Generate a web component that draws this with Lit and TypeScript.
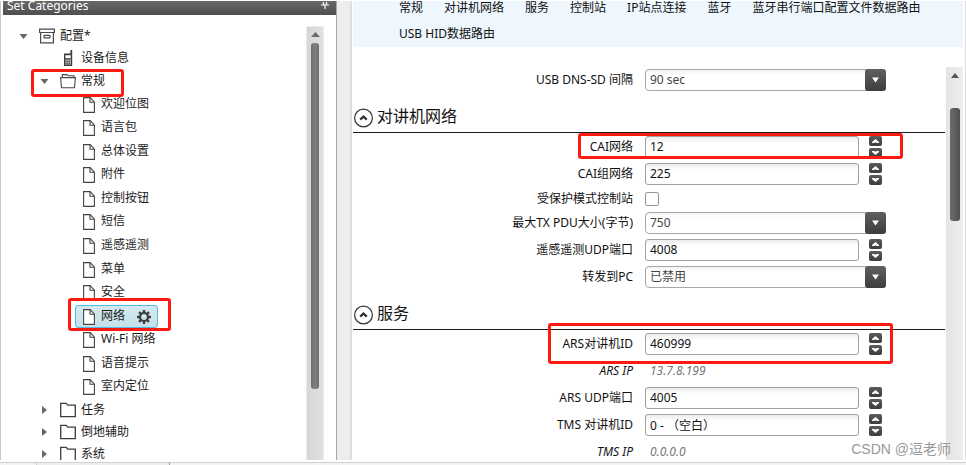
import { LitElement, html, css, svg, nothing } from "lit";
import { customElement, property, state } from "lit/decorators.js";
import { classMap } from "lit/directives/class-map.js";

const icons: Record<string, unknown> = {
  archive: svg`<svg width="16" height="16" viewBox="0 0 16 16" fill="none" stroke="#4a4a4a" stroke-width="1.2"><path d="M.6 1.1h14.8v3.4H.6zM1.6 4.500v10.400h12.800V4.500"/><rect x="5" y="7.4" width="6" height="2.4" rx=".6"/></svg>`,
  phone: svg`<svg width="16" height="16" viewBox="0 0 16 16"><path d="M10.4 0h1.8v16H4V3.6h6.4z" fill="#3c3c3c"/><path d="M5.4 5.2h5.4v3H5.4zM5.4 9.6h1.3v1.2H5.4zm2.1 0h1.3v1.2H7.5zm2.1 0h1.3v1.2H9.6zM5.4 11.6h1.3v1.2H5.4zm2.1 0h1.3v1.2H7.5zm2.1 0h1.3v1.2H9.6zM5.4 13.6h1.3v1H5.4zm2.1 0h1.3v1H7.5zm2.1 0h1.3v1H9.6z" fill="#fff"/></svg>`,
  open: svg`<svg width="16" height="16" viewBox="0 0 16 16" fill="none" stroke="#4a4a4a" stroke-width="1.1"><path d="M2.4 4.4V1.6H7l1 1.2h6v1.6M.6 4.6h14.8l-.9 10.2H1.5z"/></svg>`,
  folder: svg`<svg width="16" height="16" viewBox="0 0 16 16" fill="none" stroke="#3c3c3c" stroke-width="1.3"><path d="M.7 14.6V1.4h5.6l1.4 1.7h7.6v11.5z"/></svg>`,
  file: svg`<svg width="12" height="16" viewBox="0 0 12 16" fill="none" stroke="#444" stroke-width="1.1"><path d="M.6.6h6.6l4.2 4.6v10.2H.6z" fill="#fff"/><path d="M7 .8v4.4h4.2"/></svg>`,
};

const gear = svg`<svg width="14" height="14" viewBox="0 0 14 14" fill="none" stroke="#3a3a3a"><circle cx="7" cy="7" r="4" stroke-width="2.2"/><path d="M7 0v2.4M7 11.6V14M0 7h2.4M11.6 7H14M2.1 2.1l1.6 1.6M10.3 10.3l1.6 1.6M2.1 11.9l1.6-1.6M10.3 3.7l1.6-1.6" stroke-width="2.4"/></svg>`;

const pages = ["欢迎位图", "语言包", "总体设置", "附件", "控制按钮", "短信", "遥感遥测", "菜单", "安全", "网络", "Wi-Fi 网络", "语音提示", "室内定位"];
const folders = ["任务", "倒地辅助", "系统"];
const tabs = ["常规", "对讲机网络", "服务", "控制站", "IP站点连接", "蓝牙", "蓝牙串行端口配置文件数据路由", "USB HID数据路由"];

@customElement("category-tree")
class CategoryTree extends LitElement {
  @state() private selected = "网络";

  static styles = css`
    :host { display: flex; min-width: 0; min-height: 0; overflow: hidden; }
    ul { list-style: none; margin: 0; padding: 0; }
    .tree { flex: 1; padding-top: 10px; }
    .row, .page {
      display: flex; align-items: center; box-sizing: border-box; height: 22px;
      font: inherit; color: #1c1c1c; background: none; border: 0; margin: 0;
      padding: 0 0 0 16px; white-space: nowrap; text-align: left;
    }
    .nested > li > .row { padding-left: 37px; }
    .arrow { width: 9px; display: flex; justify-content: center; margin-right: 11px; }
    .icon { width: 16px; display: flex; margin-right: 5px; }
    .row svg, .page svg { display: block; flex: none; }
    .holder { position: relative; }
    .holder > .expanded { height: 24px; }
    .pages { display: grid; grid-auto-rows: 1fr; height: 306px; padding-left: 72px; }
    .pages li { position: relative; min-height: 0; display: flex; }
    .page { height: 100%; gap: 6px; padding: 0 6px 0 7px; border: 1px solid transparent; border-radius: 3px; }
    .page .text { padding-bottom: 2px; }
    .chosen { background: linear-gradient(#d6e9f0, #c3e0ea); border-color: #52bce4; }
    .gear { margin-left: 6px; display: flex; }
    .mark { position: absolute; border: 3px solid #fe1a10; border-radius: 3px; pointer-events: none; box-sizing: border-box; }
    .mark-group { left: 28px; width: 93px; top: 0; height: 28px; }
    .mark-page { left: -7px; width: 103px; top: -7px; bottom: -3px; }
    .bar { width: 18px; box-sizing: border-box; margin: 11px 12px 0 0; background: linear-gradient(90deg, #d6d6d6, #e1e1e1); border: solid #ececec; border-width: 1px 1px 0; display: flex; flex-direction: column; align-items: center; }
    .bar svg { margin: 5px 0 6px; flex: none; }
    .thumb { width: 8px; flex: 0 1 346px; border-radius: 3px; background: linear-gradient(90deg, #6d6d6d, #808080, #6d6d6d); }
  `;

  private arrow(open: boolean) {
    return html`<span class="arrow"><svg width="9" height="8" viewBox="0 0 9 8"><path d=${open ? "M.5 2h8l-4 5z" : "M2 0l5 4-5 4z"} fill="#666"/></svg></span>`;
  }

  render() {
    return html`
      <ul class="tree">
        <li>
          <button class="row">${this.arrow(true)}<span class="icon">${icons.archive}</span>配置*</button>
          <ul class="nested">
            <li><button class="row"><span class="arrow"></span><span class="icon">${icons.phone}</span>设备信息</button></li>
            <li class="holder">
              <button class="row expanded">${this.arrow(true)}<span class="icon">${icons.open}</span>常规</button>
              <ul class="pages">
                ${pages.map((name) => html`<li>
                  <button class=${classMap({ page: true, chosen: name === this.selected })} @click=${() => (this.selected = name)}>
                    ${icons.file}<span class="text">${name}</span>
                    ${name === this.selected ? html`<span class="gear">${gear}</span>` : nothing}
                  </button>
                  ${name === "网络" ? html`<span class="mark mark-page"></span>` : nothing}
                </li>`)}
              </ul>
              <span class="mark mark-group"></span>
            </li>
            ${folders.map((name) => html`<li><button class="row">${this.arrow(false)}<span class="icon">${icons.folder}</span>${name}</button></li>`)}
          </ul>
        </li>
      </ul>
      <div class="bar"><svg width="9" height="5" viewBox="0 0 9 5"><path d="M4.500 0L9 5H0z" fill="#6a6a6a"/></svg><div class="thumb"></div></div>
    `;
  }
}

type Kind = "number" | "select" | "check" | "info";

@customElement("setting-row")
class SettingRow extends LitElement {
  @property() label = "";
  @property() value = "";
  @property() kind: Kind = "number";
  @property() mark = "";

  static styles = css`
    :host { display: block; position: relative; }
    .row { display: grid; grid-template-columns: minmax(0, 1fr) 241px; column-gap: 12px; align-items: center; height: 22px; padding-right: 59px; }
    .check { height: 17px; }
    label { text-align: right; color: #111; white-space: nowrap; }
    .info label { font-style: italic; }
    output { font-style: italic; color: #777; padding-left: 5px; }
    .field { display: flex; align-items: center; gap: 10px; }
    input, select { font: inherit; box-sizing: border-box; margin: 0; height: 22px; }
    .text { flex: 1; min-width: 0; max-width: 214px; padding: 0 4px 1px; color: #111; border: 1px solid #a0a0a0; border-radius: 3px; background: linear-gradient(#ececec, #fff 6px); }
    .box { appearance: none; width: 14px; height: 14px; border: 1px solid #999; border-radius: 2px; background: #fff; }
    .spin { display: grid; gap: 2px; flex: none; }
    .step { width: 13px; height: 10px; padding: 0; border: 0; border-radius: 2px; background: linear-gradient(#5c5c5c, #3c3c3c); display: grid; place-items: center; }
    .combo { display: grid; grid-template-columns: 1fr 21px; }
    select { grid-area: 1 / 1 / 2 / 3; appearance: none; color: #444; padding: 0 26px 0 4px; border: 1px solid #a8a8a8; border-radius: 4px; background: linear-gradient(#f4f4f4, #fff 5px); }
    .cap { grid-area: 1 / 2; z-index: 1; pointer-events: none; border-radius: 3px; background: linear-gradient(#606060, #3d3d3d); display: grid; place-items: center; }
    .mark { position: absolute; border: 3px solid #fe1a10; border-radius: 3px; pointer-events: none; z-index: 2; }
    .tight { inset: -3px 42px -1px 225px; }
    .wide { inset: -10px 52px -9px 195px; }
  `;

  private control() {
    if (this.kind === "info") return html`<output id="c">${this.value}</output>`;
    if (this.kind === "check") return html`<div class="field"><input class="box" id="c" type="checkbox" /></div>`;
    if (this.kind === "select")
      return html`<div class="combo"><select id="c"><option>${this.value}</option></select>
        <span class="cap"><svg width="7" height="6" viewBox="0 0 7 6"><path d="M0 .5h7l-3.500 5z" fill="#fff"/></svg></span></div>`;
    return html`<div class="field"><input class="text" id="c" type="text" .value=${this.value} />
      <div class="spin">
        <button class="step" aria-label="+"><svg width="7" height="4" viewBox="0 0 7 4"><path d="M3.500 0L7 3V4H5.500L3.500 3.400 1.500 4H0V3z" fill="#fff"/></svg></button>
        <button class="step" aria-label="-"><svg width="7" height="4" viewBox="0 0 7 4"><path d="M3.500 4L7 1V0H5.500L3.500 .6 1.500 0H0V1z" fill="#fff"/></svg></button>
      </div></div>`;
  }

  render() {
    return html`<div class="row ${this.kind}"><label for="c">${this.label}</label>${this.control()}</div>
      ${this.mark ? html`<span class="mark ${this.mark}"></span>` : nothing}`;
  }
}

interface Field { label: string; value?: string; kind?: Kind; mark?: string; }

const sections: { title: string; fields: Field[] }[] = [
  {
    title: "对讲机网络",
    fields: [
      { label: "CAI网络", value: "12", mark: "tight" },
      { label: "CAI组网络", value: "225" },
      { label: "受保护模式控制站", kind: "check" },
      { label: "最大TX PDU大小(字节)", value: "750", kind: "select" },
      { label: "遥感遥测UDP端口", value: "4008" },
      { label: "转发到PC", value: "已禁用", kind: "select" },
    ],
  },
  {
    title: "服务",
    fields: [
      { label: "ARS对讲机ID", value: "460999", mark: "wide" },
      { label: "ARS IP", value: "13.7.8.199", kind: "info" },
      { label: "ARS UDP端口", value: "4005" },
      { label: "TMS 对讲机ID", value: "0 - （空白）" },
      { label: "TMS IP", value: "0.0.0.0", kind: "info" },
    ],
  },
];

@customElement("app-root")
class AppRoot extends LitElement {
  static styles = css`
    :host { display: block; font: 12px/14px "Noto Sans", "Noto Sans CJK SC", sans-serif; color: #111; }
    .app { display: flex; flex-direction: column; height: 100vh; box-sizing: border-box; padding-top: 1px; background: #fff; overflow: hidden; }
    .body { flex: 1; min-height: 0; display: grid; grid-template-columns: 336px 17px minmax(0, 1fr); grid-template-rows: minmax(0, 1fr); border-right: 1px solid #ddd; }
    .side { display: flex; flex-direction: column; min-height: 0; box-sizing: border-box; border-left: 1px solid #c8c8c8; padding-left: 2px; }
    .title { height: 14px; flex: none; box-sizing: border-box; padding: 0 7px 5px 4px; display: flex; align-items: center; justify-content: space-between; color: #fff; background: linear-gradient(#696969, #4e4e4e); }
    .title h1 { font: inherit; line-height: 8px; margin: 0; }
    .title svg { flex: none; }
    category-tree { flex: 1; }
    .split { box-sizing: border-box; background: #ededed; border-left: 1px solid #a8a8a8; border-right: 2px solid #dedede; margin-right: 1px; }
    .main { position: relative; display: flex; flex-direction: column; min-height: 0; margin-right: 2px; }
    nav { display: flex; flex-wrap: wrap; gap: 12px 21px; padding: 0 40px 6px 46px; background: #eef7fe; }
    nav a { color: #111; text-decoration: none; white-space: nowrap; }
    .view { flex: 1; min-height: 0; display: flex; overflow: hidden; }
    form { flex: 1; min-width: 0; padding-top: 22px; }
    .section { margin-top: 17px; }
    .head { display: flex; align-items: center; gap: 4px; padding-bottom: 4px; border-bottom: 1px solid #1e1e1e; margin-bottom: 3px; }
    .head h2 { font-size: 16px; line-height: 16px; font-weight: 400; margin: 0; padding-bottom: 4px; }
    .fold { width: 20px; height: 20px; padding: 0; border: 0; background: none; }
    .fold svg { display: block; }
    .fields { display: grid; gap: 5px; }
    .bar { width: 17px; flex: none; margin-left: 1px; margin-top: 20px; background: linear-gradient(90deg, #e4e4e4, #ededed); display: flex; flex-direction: column; align-items: center; }
    .bar svg { margin: 6px 0 30px; flex: none; }
    .thumb { width: 10px; height: 113px; border-radius: 3px; background: linear-gradient(90deg, #6d6d6d, #505050); }
    .water { position: absolute; right: 12px; bottom: 2px; font-family: "Liberation Sans", "Noto Sans CJK SC", sans-serif; font-size: 14px; line-height: 18px; color: #999; white-space: nowrap; }
    .status { height: 5px; flex: none; box-sizing: border-box; border-top: 2px solid #fff; background: #f3f3f3; display: flex; }
    .status span { flex: 1; border-top: 1px solid #d0d0d0; }
    .status .first { flex: 0 0 36px; border-right: 1px solid #ccc; }
    .status .second { flex: 0 0 132px; border-right: 1px solid #999; background: #eee; }
  `;

  render() {
    return html`<div class="app">
      <div class="body">
        <aside class="side">
          <header class="title"><h1>Set Categories</h1>
            <svg width="8" height="8" viewBox="0 0 8 8"><path d="M2.500 0v2.500M5.500 0v2.500M0 3h8M4 3v4" stroke="#fff" stroke-width="1.200"/></svg>
          </header>
          <category-tree></category-tree>
        </aside>
        <div class="split"></div>
        <main class="main">
          <nav>${tabs.map((t) => html`<a href="#">${t}</a>`)}</nav>
          <div class="view">
            <form>
              <setting-row label="USB DNS-SD 间隔" value="90 sec" kind="select"></setting-row>
              ${sections.map((s) => html`<section class="section">
                <div class="head">
                  <button class="fold" type="button" aria-label=${s.title}><svg width="20" height="20" viewBox="0 0 20 20" fill="none" stroke="#333"><circle cx="10.500" cy="10" r="8.900" stroke-width="1.200"/><path d="M7.200 11.600l3.300-3 3.300 3" stroke-width="2.200"/></svg></button>
                  <h2>${s.title}</h2>
                </div>
                <div class="fields">${s.fields.map((f) => html`<setting-row .label=${f.label} .value=${f.value ?? ""} .kind=${f.kind ?? "number"} .mark=${f.mark ?? ""}></setting-row>`)}</div>
              </section>`)}
            </form>
            <div class="bar"><svg width="8" height="5" viewBox="0 0 8 5"><path d="M4 0l4 5H0z" fill="#555"/></svg><div class="thumb"></div></div>
          </div>
          <div class="water">CSDN @逗老师</div>
        </main>
      </div>
      <footer class="status"><span class="first"></span><span class="second"></span><span></span></footer>
    </div>`;
  }
}
